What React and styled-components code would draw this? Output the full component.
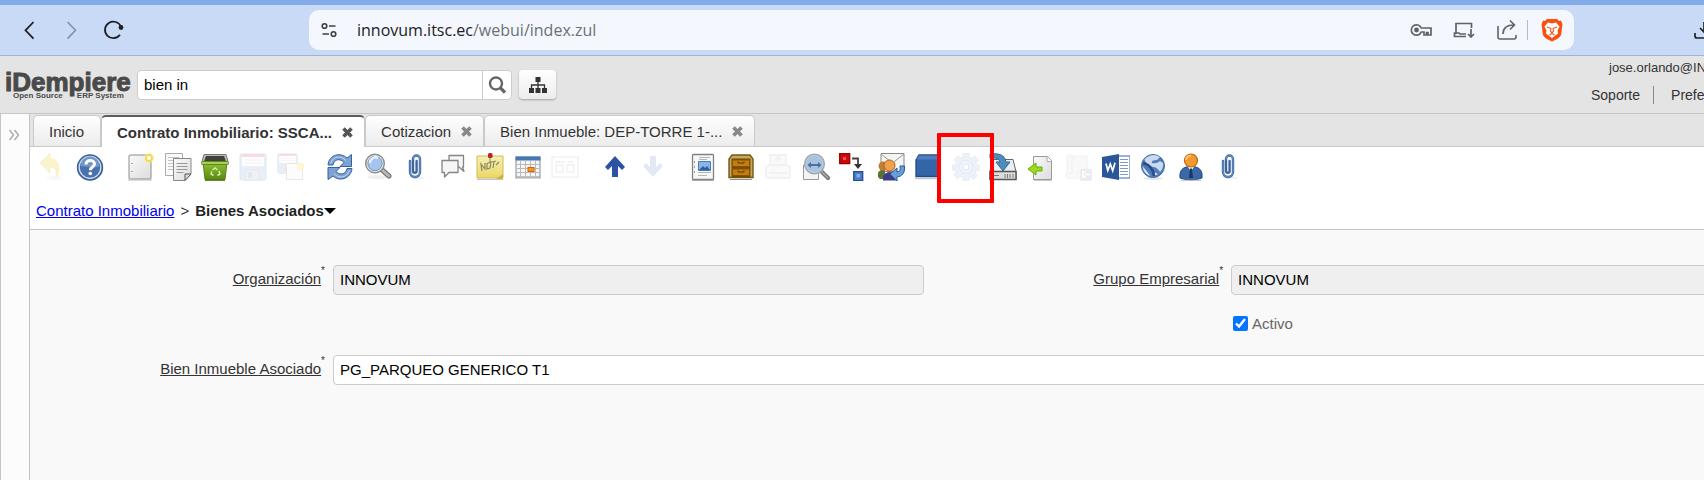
import React from 'react';
import styled, { createGlobalStyle, css } from "styled-components";

const GlobalStyle = createGlobalStyle`
    * { box-sizing: border-box; }
    body {
        margin: 0;
        overflow: hidden;
        background: #f9f9f9;
        font-family: "Liberation Sans", Arial, sans-serif;
        font-size: 15px;
        color: #333;
    }
    button, input { font: inherit; color: inherit; }
    svg { display: block; flex: none; }
`

/* ---------- toolbar drawings, all on a 28 x 28 box ---------- */

const Gradients = () => (
    <Defs aria-hidden="true">
        <defs>
            <linearGradient id="blue" x1="0" y1="0" x2="0" y2="1">
                <stop offset="0" stopColor="#7fa3d2" />
                <stop offset="1" stopColor="#33599b" />
            </linearGradient>
            <linearGradient id="paper" x1="0" y1="0" x2="1" y2="1">
                <stop offset="0" stopColor="#fafafa" />
                <stop offset="1" stopColor="#dcdcdc" />
            </linearGradient>
            <linearGradient id="green" x1="0" y1="0" x2="0" y2="1">
                <stop offset="0" stopColor="#93c13a" />
                <stop offset="1" stopColor="#5a8a10" />
            </linearGradient>
            <linearGradient id="note" x1="0" y1="0" x2="0" y2="1">
                <stop offset="0" stopColor="#f6efb4" />
                <stop offset="1" stopColor="#ecd765" />
            </linearGradient>
        </defs>
    </Defs>
)

const Clip = () => (
    <g fill="none" strokeLinecap="round">
        <ellipse cx="17" cy="25" rx="7" ry="1" fill="#eee" />
        <path d="M9 8v11a5 5 0 0 0 10 0V6a3.500 3.500 0 0 0-7 0v12a1.800 1.800 0 0 0 3.600 0V8" stroke="#3c669f" strokeWidth="2.400" />
        <path d="M9 8v11a5 5 0 0 0 10 0V6a3.500 3.500 0 0 0-7 0" stroke="#7ea3d2" strokeWidth=".8" />
    </g>
)

const Floppy = () => (
    <g>
        <rect x="1" y="1" width="26" height="26" rx="2" fill="#e9eff9" stroke="#dde7f5" />
        <rect x="3" y="1" width="22" height="12" fill="#fff" />
        <rect x="3" y="1" width="22" height="3" fill="#fadcdc" />
        <path d="M5 7h18M5 10h18" stroke="#f1f1f1" />
        <rect x="6" y="17" width="14" height="10" fill="#f1f1f1" stroke="#e6e8ec" />
        <rect x="9" y="19" width="4" height="6" rx="1" fill="#dfe7f3" />
    </g>
)

const drawings = {
    undo: (
        <g>
            <ellipse cx="15" cy="25" rx="8" ry="2" fill="#f8f8f8" />
            <path d="M1 10 11 0v6c9 0 12 9 6 19 1-8 0-11-6-11v6z" fill="#faf3cb" stroke="#f6edbc" strokeWidth=".7" />
        </g>
    ),
    help: (
        <g>
            <circle cx="14" cy="14.500" r="12.500" fill="url(#blue)" stroke="#3b619e" strokeWidth="1.400" />
            <circle cx="14" cy="14.500" r="10.800" fill="#4a73ae" stroke="#d6e2f2" strokeWidth="1.200" />
            <path d="M4.500 13a9.500 9.500 0 0 1 19 0c-5 3-13 0-19 0z" fill="#7296c8" />
            <path d="M10 11.500c0-5.500 8.500-5 8.500-.5 0 3-4.200 3-4.200 6.200" fill="none" stroke="#fff" strokeWidth="3" />
            <circle cx="14.300" cy="20.500" r="1.800" fill="#fff" />
        </g>
    ),
    create: (
        <g>
            <rect x="3" y="2" width="22" height="24" rx="1" fill="url(#paper)" stroke="#8c8c8c" />
            <path d="M2 27h24" stroke="#bbb" />
            <path d="M5 10.500h2M5 18.500h2" stroke="#aaa" />
            <circle cx="23" cy="5" r="5" fill="#fbf0a0" opacity=".7" />
            <circle cx="23" cy="5" r="3" fill="#fff" stroke="#efd94d" strokeWidth="1.800" />
        </g>
    ),
    copy: (
        <g stroke="#888">
            <path d="M1.500.5h17v22h-17z" fill="#fafafa" stroke="#aaa" />
            <path d="M4 4.500h11M4 7.500h8M4 10.500h6M4 13.500h5M4 16.500h5" stroke="#c4c4c4" />
            <path d="M9.500 5.500h17.500v15.500l-6 6.500H9.500z" fill="url(#paper)" />
            <path d="M12.500 10.500h11M12.500 13.500h11M12.500 16.500h11M12.500 19.500h7" stroke="#999" />
            <path d="M27 21h-6v6.500z" fill="#ddd" stroke="#555" />
        </g>
    ),
    trash: (
        <g>
            <path d="M3 1.500h22l2 7H1z" fill="#b9bbb7" stroke="#777" />
            <path d="M5 3h18l2 5.500H3z" fill="#3f433c" />
            <path d="M2 9h24l-2 17.500H4z" fill="url(#green)" stroke="#558311" />
            <rect x=".5" y="8.500" width="27" height="3" rx="1" fill="#a9d057" stroke="#5c8b16" />
            <path d="M11.500 17l2.500-2 2.500 2M18 18l1 3-2.500 1.500M12.500 22.500l-2.500-1.500.8-2.500" fill="none" stroke="#d9ecaf" strokeWidth="1.500" />
            <path d="M4 27.300h20" stroke="#47620f" />
        </g>
    ),
    save: <Floppy />,
    saveNew: (
        <g>
            <g transform="translate(1 0) scale(.75)"><Floppy /></g>
            <rect x="10.500" y="10.500" width="16" height="16" fill="#fcfcfc" stroke="#e8e8e8" />
            <circle cx="24.500" cy="13.500" r="4" fill="#fcf6d1" />
        </g>
    ),
    refresh: (
        <g stroke="#36619f" strokeWidth="1">
            <path d="M2 12C3 1 15-1 21 5l4.500-3.500v12H14l4-4C14 5 8 6 7 12z" fill="#7ca2d2" />
            <path d="M26 15.500C25 26 13 29 7 23l-5 3.500v-12h12l-4 4c4 4 10 3 11-3z" fill="#7ca2d2" />
            <path d="M4.500 10.500C7 3 15 2 20 7.500M23.500 17.500C21 25 12 26 8 20.500" fill="none" stroke="#c2d6ee" />
        </g>
    ),
    find: (
        <g>
            <ellipse cx="13" cy="24" rx="10" ry="2" fill="#efefef" />
            <path d="m17 16 8 7" stroke="#777" strokeWidth="5" strokeLinecap="round" />
            <path d="m17 16 8 7" stroke="#bbb" strokeWidth="2.500" strokeLinecap="round" />
            <circle cx="11" cy="10.500" r="9.300" fill="#f3f3f3" stroke="#8e8e8e" strokeWidth="1.500" />
            <circle cx="11" cy="10.500" r="7.200" fill="#a6c5ec" stroke="#6a93c9" />
            <path d="M6 10a5.500 5.500 0 0 1 8-5" stroke="#e9f2fc" strokeWidth="2.500" fill="none" />
        </g>
    ),
    clip: <Clip />,
    chat: (
        <g fill="#f6f6f6" stroke="#858585" strokeWidth="1.300" strokeLinejoin="round">
            <path d="M10 2.500h14.500V14h-1l1.500 4.500-5-4.500H10z" />
            <path d="M3 7.500h16v12h-9L5.500 24v-4.500H3z" />
        </g>
    ),
    note: (
        <g>
            <path d="M1 3h26v22H1z" fill="url(#note)" stroke="#d1bd57" />
            <path d="M1 26.300h26" stroke="#bbb" />
            <path d="m20 26 7-5v5z" fill="#cdb344" />
            <path d="m6 18-1-7 4 5 0-6M11 10.500l4-1.500-1 6-3 1zM16 9l4-1M18 9l-1 6M20 12l3-3" fill="none" stroke="#8d8862" strokeWidth="1.200" />
            <path d="M14 4v5" stroke="#888" />
            <rect x="12" y="0" width="4.500" height="5" rx="1.500" fill="#b9232c" />
        </g>
    ),
    calendar: (
        <g>
            <rect x="2" y="4" width="24" height="20" fill="#f6f6f4" stroke="#888" />
            <path d="M1.500 3.500h25v4h-25z" fill="#4577b7" />
            <path d="M3 11.500h22M3 15.500h22M3 19.500h22M6.500 8v15M11.500 8v15M16.500 8v15M21.500 8v15" stroke="#b9b9b9" />
            <rect x="14" y="14.500" width="6" height="4" fill="#f49131" stroke="#d86200" />
            <path d="M1 25h26" stroke="#aaa" />
        </g>
    ),
    cards: (
        <g fill="none" stroke="#f1f1f1" strokeWidth="1.400">
            <rect x="1" y="4" width="26" height="20" />
            <path d="M5 12h7v7H5zM4 9h10M16 12h7v7h-7zM17 9h5" />
        </g>
    ),
    up: <path d="m14 3 10 11-3 3-4-4v11h-6V13l-4 4-3-3z" fill="#2c51a5" />,
    down: <path d="m14 24 10-11-3-3-4 4V3h-6v11l-4-4-3 3z" fill="#e3e8f5" />,
    report: (
        <g>
            <rect x="3.500" y="1.500" width="21" height="25" rx="1" fill="#f7f7f7" stroke="#818181" strokeWidth="1.300" />
            <path d="M5.500 8v2M5.500 13v2M5.500 18v2" stroke="#999" />
            <path d="M10 4.500h11M10 6.500h8M9 19.500h13M9 22.500h9" stroke="#b8b8b8" />
            <path d="M9.500 8.500h12v9h-12z" fill="#8ab4e6" stroke="#4a7bba" />
            <path d="m10 17 4-4 2 2 2-2 3 4z" fill="#315f9e" />
            <path d="M3 27.500h22" stroke="#aaa" />
        </g>
    ),
    archive: (
        <g>
            <path d="M5 2h18l3 4v18.500H2V6z" fill="#c5a860" stroke="#73571a" strokeWidth="1.400" />
            <path d="M4.500 5.500h19v19h-19z" fill="#704c05" />
            <path d="M5.500 7h17v6.500h-17zM5.500 16h17v6.500h-17z" fill="#c37d11" stroke="#8b5200" />
            <path d="M11 8.500v1.500h6V8.500M11 17.500V19h6v-1.500" stroke="#573a03" fill="none" />
            <path d="M3 26.500h22" stroke="#93917e" />
        </g>
    ),
    print: (
        <g fill="#fafafa" stroke="#eee" strokeWidth="1.300">
            <path d="M6 12V2h16v10M2 20v-6l4-2h16l4 2v9q0 2-2 2H4q-2 0-2-2z" />
            <path d="M5 20h18M14 9V4m-3 3 3-3 3 3" fill="none" />
        </g>
    ),
    zoomDoc: (
        <g>
            <path d="M1.500 12v14.500h15V15z" fill="#f4f4f4" stroke="#999" />
            <path d="m18 17 8 8" stroke="#777" strokeWidth="4" strokeLinecap="round" />
            <path d="m18 17 8 8" stroke="#aaa" strokeWidth="1.600" />
            <circle cx="12.500" cy="11" r="9.800" fill="#a9c3df" stroke="#a2a7ad" strokeWidth="1.500" />
            <circle cx="12.500" cy="11" r="8.500" fill="none" stroke="#b9d0e8" />
            <path d="m5.500 12 3.500-3v2h7V9l3.500 3-3.500 3v-2H9v2z" fill="#4a6f9c" />
        </g>
    ),
    transfer: (
        <g>
            <path d="M.7.700h10v10H.7z" fill="#cf0a0a" stroke="#900" strokeWidth="1.300" />
            <path d="M4 4h3v3H4z" fill="#e65353" />
            <path d="M13 5.500h6V12" stroke="#444" strokeWidth="1.800" fill="none" />
            <path d="m15 11 8 0-4 5z" fill="#333" />
            <path d="M14.700 18.700h9v9h-9z" fill="#4a7bc4" stroke="#204f95" strokeWidth="1.300" />
            <path d="M17.500 21h3.500v3.500h-3.500z" fill="#87acdf" />
        </g>
    ),
    mail: (
        <g>
            <path d="M4 .5h23v18H4z" fill="#f5f5f3" stroke="#888" />
            <path d="m4 1 11.500 9L27 1" fill="none" stroke="#999" />
            <path d="M1 24v-4q2-4 7-3v9H3z" fill="#5a7331" />
            <circle cx="6" cy="13" r="4.500" fill="#c07d35" />
            <path d="M6 27.500v-4q3-6 10-4l3 8z" fill="#413c86" />
            <circle cx="12.500" cy="12.500" r="5.500" fill="#efa14f" stroke="#b5620f" />
            <path d="m13 21 7-6v4q4 0 3-6h4.500q1 10-7.500 11v4z" fill="#6a9edb" stroke="#275a9e" />
        </g>
    ),
    product: (
        <g>
            <path d="m5 2 18 0 2 4v17.500H2V7z" fill="#3465a8" stroke="#204a87" strokeWidth="1.300" />
            <path d="m5 2.500-2.500 4H25l-2-4z" fill="#4d7fc0" />
            <path d="M1 25.500h25" stroke="#bcc4cf" strokeWidth="1.500" />
        </g>
    ),
    process: (
        <g fill="#edf1f8" stroke="#e3e9f3" strokeWidth=".7">
            <path d="M11 4V.5h6V4l3 1.200 2.700-2.400 4 4-2.400 2.700 1 2.500H28v5h-3.500l-1 3 2.400 2.600-4 4-2.600-2.300-2.600 1V28h-5.500v-3.400l-3-1.200-2.500 2.400-4-4 2.400-2.600L3 17H0v-5h3.200l1-3L2 6.800l4-4 2.500 2.300z" />
            <circle cx="14" cy="14" r="6.500" fill="#f0f4fb" stroke="#dce5f0" />
            <circle cx="14" cy="14" r="3" fill="#fff" stroke="#d6e0ec" />
        </g>
    ),
    drive: (
        <g>
            <path d="M4 6.500h20l3 12v8H1v-8z" fill="#eee" stroke="#666" />
            <path d="M1 18.500h26v8H1z" fill="#ddd" stroke="#555" strokeWidth="1.400" />
            <path d="M16 21v4M18.500 21v4M21 21v4M3 22.500h7M24 21v4" stroke="#777" />
            <path d="M1 1q15-2 16 8h4l-7 9-7-9h4q-1-5-10-4z" fill="#4f8cba" stroke="#306b99" />
        </g>
    ),
    fileImport: (
        <g>
            <path d="M6.500 3.500h14l4 4v19h-18z" fill="url(#paper)" stroke="#999" />
            <path d="M20 3.500v5h5" fill="#fff" stroke="#aaa" />
            <path d="m1 16 8-6v4h6v4H9v4z" fill="#9bdb1d" stroke="#69ac08" />
            <path d="M7 27.500h18" stroke="#ccc" />
        </g>
    ),
    csv: (
        <g fill="#f9f9f9" stroke="#f0f0f0">
            <path d="M3 3q3-3 5 0h15v15h-9v7H3q-3-2 0-5z" />
            <path d="M8 3v17H3" fill="none" />
            <rect x="16" y="16" width="12" height="12" rx="2" fill="#e8ecf0" />
            <path d="M22 19h-3v5h3M21 21.500h5" stroke="#fff" strokeWidth="1.500" fill="none" />
        </g>
    ),
    word: (
        <g>
            <path d="M16 3h12v22H16z" fill="#fff" stroke="#4166ad" />
            <path d="M18 6.500h8M18 9.500h8M18 12.500h8M18 15.500h8M18 18.500h8M18 21.500h8" stroke="#7e99ca" />
            <path d="M0 4 17 1v26L0 24z" fill="#2b579a" />
            <path d="m4 10.500 1.800 7 2.500-6.500 2.400 6.700 2.300-8" fill="none" stroke="#fff" strokeWidth="1.700" />
        </g>
    ),
    globe: (
        <g>
            <ellipse cx="14" cy="25.500" rx="10" ry="1.500" fill="#e5e5e5" />
            <circle cx="14" cy="13" r="11.500" fill="#4f7bb9" stroke="#426faa" />
            <path d="M5.500 6q8-7 15.500-2l-3 3q-6 0-5 3 5 1 8-2l3 2q1 5-3 9-3-5-7-5-5-1-8-6z" fill="#c9daee" />
            <path d="M3.500 13q4 5 8 10-7-2-8-10M15 19l4 2-4 2z" fill="#dce7f3" />
            <path d="M4 10q5 1 8 5t3 8" fill="none" stroke="#274b84" strokeWidth="2.500" />
        </g>
    ),
    person: (
        <g>
            <path d="M3 25q-1-9 6-11h10q7 2 6 11-11 4-22 0z" fill="#3d68a8" stroke="#204a87" />
            <path d="m11 14 3 4 3-4z" fill="#fff" />
            <path d="m13 16 1-1 1 1 1 9h-4z" fill="#1d3765" />
            <circle cx="14" cy="7.500" r="6.500" fill="#f29a31" stroke="#bd6507" strokeWidth="1.200" />
            <path d="M9 7q0-4 5-4.500" stroke="#fbc575" strokeWidth="2" fill="none" />
            <path d="M4 27.300h20" stroke="#bbb" />
        </g>
    ),
}

/* null leaves a gap between two groups of buttons */
const tools = [
    ["undo", "Deshacer", true], ["help", "Ayuda"], null,
    ["create", "Nuevo"], ["copy", "Copiar"], ["trash", "Eliminar"], ["save", "Guardar", true], ["saveNew", "Guardar y crear", true], null,
    ["refresh", "Refrescar"], ["find", "Buscar registro"], ["clip", "Adjunto"], ["chat", "Chat"], ["note", "Nota"], ["calendar", "Calendario"], ["cards", "Vista", true], null,
    ["up", "Registro padre"], ["down", "Registro detalle", true], null,
    ["report", "Informe"], ["archive", "Archivo"], ["print", "Imprimir", true], ["zoomDoc", "Zoom"], ["transfer", "Flujo activo"], ["mail", "Solicitudes"], ["product", "Producto"], ["process", "Proceso", true],
    ["drive", "Exportar"], ["fileImport", "Importar archivo"], ["csv", "Importar CSV", true], ["word", "Word"], ["globe", "Sitio web"], ["person", "Usuario"], ["clip", "Adjuntar"],
]

const tabs = [
    { title: "Inicio" },
    { title: "Contrato Inmobiliario: SSCA...", active: true, closable: true },
    { title: "Cotizacion", closable: true },
    { title: "Bien Inmueble: DEP-TORRE 1-...", closable: true },
]

const CloseIcon = () => (
    <svg width="11" height="11" viewBox="0 0 11 11">
        <path d="m1.500 1.500 8 8m0-8-8 8" stroke="currentColor" strokeWidth="3.600" />
    </svg>
)

const BrowserBar = () => (
    <Browser>
        <BrowserNav>
            <PlainButton aria-label="Atrás">
                <svg width="22" height="22" viewBox="0 0 22 22"><path d="m14.500 3-8 8.300 8 8.300" fill="none" stroke="#202124" strokeWidth="1.800" /></svg>
            </PlainButton>
            <PlainButton aria-label="Adelante">
                <svg width="22" height="22" viewBox="0 0 22 22"><path d="m6.500 3 8 8.300-8 8.300" fill="none" stroke="#8590a6" strokeWidth="1.600" /></svg>
            </PlainButton>
            <PlainButton aria-label="Recargar">
                <svg width="22" height="22" viewBox="0 0 22 22">
                    <path d="M17 15.800a8.300 8.300 0 1 1 1-8" fill="none" stroke="#202124" strokeWidth="1.800" />
                    <circle cx="18" cy="8.500" r="2.400" fill="#202124" />
                </svg>
            </PlainButton>
        </BrowserNav>
        <Address>
            <PlainButton aria-label="Información del sitio">
                <svg width="16" height="16" viewBox="0 0 16 16" fill="none" stroke="#3c4043" strokeWidth="1.600">
                    <circle cx="3.500" cy="4" r="2.300" /><path d="M8 4h6.500M1.500 12H8" /><circle cx="12.500" cy="12" r="2.300" />
                </svg>
            </PlainButton>
            <Url><b>innovum.itsc.ec</b>/webui/index.zul</Url>
            <AddressTools>
                <PlainButton aria-label="Contraseñas">
                    <svg width="22" height="22" viewBox="0 0 22 22" fill="none" stroke="#5f6368" strokeWidth="1.700">
                        <path d="M11.300 9A5.200 5.200 0 1 0 11.300 13H14v3h2.500v-2.500h1.500V16H21V9z" /><circle cx="6.500" cy="11" r="1.600" fill="#5f6368" />
                    </svg>
                </PlainButton>
                <PlainButton aria-label="Instalar">
                    <svg width="22" height="22" viewBox="0 0 22 22" fill="none" stroke="#5f6368" strokeWidth="1.700">
                        <path d="M18.500 9V4.500H3V15M13 17.500H1.500V14H6l1 1h6M18 10v8m-3-3 3 3 3-3" />
                    </svg>
                </PlainButton>
                <PlainButton aria-label="Compartir">
                    <svg width="22" height="22" viewBox="0 0 22 22" fill="none" stroke="#5f6368" strokeWidth="1.600">
                        <path d="M2 7v11q0 2 2 2h14q2 0 2-2v-2M7 15q0-9 11-9M14 1.500 18.500 6 14 10.500" />
                    </svg>
                </PlainButton>
                <ShieldButton aria-label="Brave Shields">
                    <svg width="22" height="24" viewBox="0 0 22 24">
                        <path d="M6 1h10l2 2 2-.5 1.500 4L20 17q-1 3-9 6.500Q3 20 2 17L.5 6.500l1.500-4L4 3z" fill="#fb4f12" />
                        <path d="m7 4.500 4 1 4-1 3.500 4-2 4 .5 3-6 4.500-6-4.500.5-3-2-4z" fill="#fff" />
                        <path d="m6 9 4 1.500-.5 2.500 1.500 2 1.500-2-.5-2.500L16 9M8.500 17l2.500-1.500 2.500 1.500" fill="none" stroke="#fb4f12" strokeWidth="1.100" />
                    </svg>
                </ShieldButton>
            </AddressTools>
        </Address>
        <Downloads aria-label="Descargas">
            <svg width="22" height="22" viewBox="0 0 22 22" fill="none" stroke="#202124" strokeWidth="1.700">
                <path d="M1 14v3q0 2 2 2h14q2 0 2-2v-3M10 3v10m-4-4 4 4 4-4" />
            </svg>
        </Downloads>
    </Browser>
)

const AppHeader = () => (
    <Header>
        <Logo>
            <LogoName>iDempiere</LogoName>
            <LogoTag><span>Open Source</span><span>ERP System</span></LogoTag>
        </Logo>
        <SearchBox>
            <SearchInput aria-label="Buscar" defaultValue="bien in" />
            <SearchButton aria-label="Buscar">
                <svg width="18" height="18" viewBox="0 0 18 18" fill="none" stroke="#666">
                    <circle cx="8" cy="7.500" r="6" strokeWidth="2.400" /><path d="m12 11.500 5 5" strokeWidth="3.200" />
                </svg>
            </SearchButton>
        </SearchBox>
        <MenuButton aria-label="Menú">
            <svg width="18" height="16" viewBox="0 0 18 16" fill="#333">
                <path d="M6.500 0h5v5h-5zM0 11h5v5H0zM6.500 11h5v5h-5zM13 11h5v5h-5z" />
                <path d="M9 4v8M2.500 12V8h13v4" fill="none" stroke="#333" strokeWidth="1.300" />
            </svg>
        </MenuButton>
        <Account>
            <User>jose.orlando@INNOVUM</User>
            <AccountLinks>
                <AccountLink href="#soporte">Soporte</AccountLink>
                <AccountLink href="#preferencias">Preferencias</AccountLink>
            </AccountLinks>
        </Account>
    </Header>
)

const FieldLabel = ({htmlFor, children}) => (
    <Label htmlFor={htmlFor}>
        <LabelText>{children}</LabelText>
        <Required>*</Required>
    </Label>
)

const App = () => {
    return (
        <Page>
            <GlobalStyle />
            <Gradients />
            <BrowserBar />
            <AppHeader />
            <Main>
                <Side>
                    <PlainButton aria-label="Expandir menú">
                        <svg width="12" height="12" viewBox="0 0 12 12"><path d="m1.500 1 4 5-4 5m5-10 4 5-4 5" fill="none" stroke="#aaa" strokeWidth="1.400" /></svg>
                    </PlainButton>
                </Side>
                <Content>
                    <Tabs>
                        {tabs.map(tab => (
                            <Tab key={tab.title} $active={tab.active} $closable={tab.closable}>
                                <TabTitle $active={tab.active}>{tab.title}</TabTitle>
                                {tab.closable && <TabClose $active={tab.active} aria-label={`Cerrar ${tab.title}`}><CloseIcon /></TabClose>}
                            </Tab>
                        ))}
                    </Tabs>
                    <Toolbar>
                        {tools.map((tool, i) => tool ? (
                            <Tool key={i} aria-label={tool[1]} disabled={tool[2]}>
                                <svg width="28" height="28" viewBox="0 0 28 28">{drawings[tool[0]]}</svg>
                                {tool[0] === "process" && <Highlight />}
                            </Tool>
                        ) : <ToolGap key={i} />)}
                    </Toolbar>
                    <Breadcrumb>
                        <a href="#contrato">Contrato Inmobiliario</a>
                        <span>&gt;</span>
                        <Current>
                            Bienes Asociados
                            <svg width="12" height="6" viewBox="0 0 12 6"><path d="M0 0h12L6 6z" /></svg>
                        </Current>
                    </Breadcrumb>
                    <Form>
                        <FieldLabel htmlFor="org">Organización</FieldLabel>
                        <Field id="org" defaultValue="INNOVUM" readOnly />
                        <FieldLabel htmlFor="grupo">Grupo Empresarial</FieldLabel>
                        <Field id="grupo" defaultValue="INNOVUM" readOnly $bleed />
                        <Check>
                            <input type="checkbox" defaultChecked />
                            Activo
                        </Check>
                        <FieldLabel htmlFor="bien">Bien Inmueble Asociado</FieldLabel>
                        <Field id="bien" defaultValue="PG_PARQUEO GENERICO T1" $wide $bleed />
                    </Form>
                </Content>
            </Main>
        </Page>
    );
};

const Page = styled.div`
    min-height: 100vh;
    display: flex;
    flex-direction: column;
    overflow: hidden;
`

const Defs = styled.svg`
    position: absolute;
    width: 0;
    height: 0;
`

const PlainButton = styled.button`
    border: none;
    background: transparent;
    padding: 0;
    display: flex;
    align-items: center;
    justify-content: center;
`

const Browser = styled.div`
    height: 56px;
    display: flex;
    align-items: center;
    background: #c9daf6;
    border-top: 5px solid #84abe9;
    border-bottom: 1px solid #9fb1d4;
`

const BrowserNav = styled.div`
    width: 309px;
    padding-left: 19px;
    display: flex;
    gap: 20px;
`

const Address = styled.div`
    flex: 1;
    height: 40px;
    padding: 0 11px 0 12px;
    display: flex;
    align-items: center;
    gap: 20px;
    background: #f4f8fe;
    border-radius: 10px;
`

const Url = styled.span`
    flex: 1;
    font-family: "Open Sans", sans-serif;
    font-size: 16px;
    color: #6b7075;
    b {
        font-weight: 400;
        color: #202124;
    }
`

const AddressTools = styled.div`
    display: flex;
    align-items: center;
    gap: 21px;
`

const ShieldButton = styled(PlainButton)`
    height: 20px;
    margin-left: -12px;
    padding-left: 13px;
    border-left: 1px solid #b5bbc5;
`

const Downloads = styled(PlainButton)`
    width: 130px;
    padding-left: 120px;
    justify-content: flex-start;
    overflow: hidden;
`

const Header = styled.header`
    height: 58px;
    display: flex;
    align-items: center;
    background: #e4e4e4;
    border-bottom: 1px solid #c5c5c5;
`

const Logo = styled.div`
    width: 137px;
    padding-left: 5px;
    color: #4a4a4a;
    font-weight: 700;
`

const LogoName = styled.div`
    font-size: 26px;
    line-height: 22px;
    -webkit-text-stroke: 1px #4a4a4a;
`

const LogoTag = styled.div`
    padding-left: 8px;
    display: flex;
    gap: 14px;
    font-size: 8px;
    line-height: 6px;
`

const SearchBox = styled.div`
    height: 30px;
    width: 375px;
    display: flex;
    background: #fff;
    border: 1px solid #ccc;
    border-radius: 4px;
`

const SearchInput = styled.input`
    flex: 1;
    min-width: 0;
    border: none;
    padding: 0 6px;
    background: transparent;
    color: #000;
`

const SearchButton = styled(PlainButton)`
    width: 29px;
    border-left: 1px solid #ccc;
`

const MenuButton = styled(PlainButton)`
    width: 37px;
    height: 29px;
    margin-left: 7px;
    border-radius: 4px;
    background: linear-gradient(#fff, #ececec);
    box-shadow: 0 1px 2px rgba(0, 0, 0, 0.3);
`

const Account = styled.div`
    width: 113px;
    margin-left: auto;
    padding-bottom: 6px;
    display: flex;
    flex-direction: column;
    gap: 9px;
    overflow: hidden;
    white-space: nowrap;
`

const User = styled.span`
    padding-left: 18px;
    font-size: 13px;
    line-height: 18px;
`

const AccountLinks = styled.div`
    display: flex;
`

const AccountLink = styled.a`
    font-size: 14px;
    line-height: 18px;
    color: inherit;
    text-decoration: none;
    & + & {
        margin-left: 13px;
        padding-left: 17px;
        border-left: 1px solid #888;
    }
`

const Main = styled.main`
    flex: 1;
    display: flex;
`

const Side = styled.aside`
    width: 30px;
    padding: 15px 0 0 7px;
    background: #fcfcfc;
    border: solid #c5c5c5;
    border-width: 0 1px;
`

const Content = styled.section`
    flex: 1;
    min-width: 0;
    display: flex;
    flex-direction: column;
    background: #fff;
`

const Tabs = styled.nav`
    height: 33px;
    padding: 1px 0 0 3px;
    display: flex;
    background: #e4e4e4;
    border-bottom: 1px solid #c9c9c9;
`

const Tab = styled.div`
    padding: 0 ${props => props.$closable ? 11 : 16}px 0 15px;
    display: flex;
    align-items: center;
    gap: 10px;
    background: linear-gradient(#fefefe, #ececec);
    border: 1px solid #c9c9c9;
    border-bottom: none;
    border-radius: 5px 5px 0 0;
    ${props => props.$active && css`
        margin-bottom: -1px;
        background: #fff;
        border-top: 2px solid #5c5c5c;
    `}
`

const TabTitle = styled.span`
    font-weight: ${props => props.$active ? 700 : 400};
    white-space: nowrap;
`

const TabClose = styled(PlainButton)`
    color: ${props => props.$active ? "#555" : "#888"};
`

const Toolbar = styled.div`
    width: 100%;
    max-width: 1217px;
    height: 40px;
    padding-left: 4px;
    display: flex;
    align-items: center;
`

const Tool = styled(PlainButton)`
    flex: 3;
    position: relative;
`

const ToolGap = styled.span`
    flex: 1;
`

/* frame drawn over the process button and its neighbours */
const Highlight = styled.span`
    position: absolute;
    inset: -20px -10px -22px;
    z-index: 1;
    border: 4px solid #f00;
    border-radius: 1px;
`

const Breadcrumb = styled.div`
    height: 43px;
    padding: 5px 6px 0;
    display: flex;
    align-items: center;
    gap: 6px;
    border-bottom: 1px solid #c5c5c5;
    a { color: #00e; }
`

const Current = styled.b`
    display: flex;
    align-items: center;
    color: #222;
`

const Form = styled.form`
    flex: 1;
    padding-top: 35px;
    display: grid;
    grid-template-columns: 303px 5fr 307px 4fr;
    grid-auto-rows: 30px;
    align-content: start;
    row-gap: 15px;
    background: #f9f9f9;
    overflow: hidden;
`

const Label = styled.label`
    justify-self: end;
    display: flex;
    padding-right: 8px;
    line-height: 28px;
`

const LabelText = styled.span`
    text-decoration: underline;
`

const Required = styled.span`
    font-size: 10px;
    line-height: 12px;
`

const Field = styled.input`
    min-width: 0;
    padding: 0 6px 2px;
    background: ${props => props.readOnly ? "#efefef" : "#fff"};
    border: 1px solid #ccc;
    border-radius: 4px;
    color: #000;
    ${props => props.$wide && css`grid-column: 2 / -1;`}
    ${props => props.$bleed && css`margin-right: -8px;`}
`

const Check = styled.label`
    grid-column: 4;
    display: flex;
    align-items: center;
    gap: 4px;
    padding-bottom: 3px;
    color: #666;
    input {
        width: 15px;
        height: 15px;
        margin: 0 0 0 2px;
    }
`

export default App;
